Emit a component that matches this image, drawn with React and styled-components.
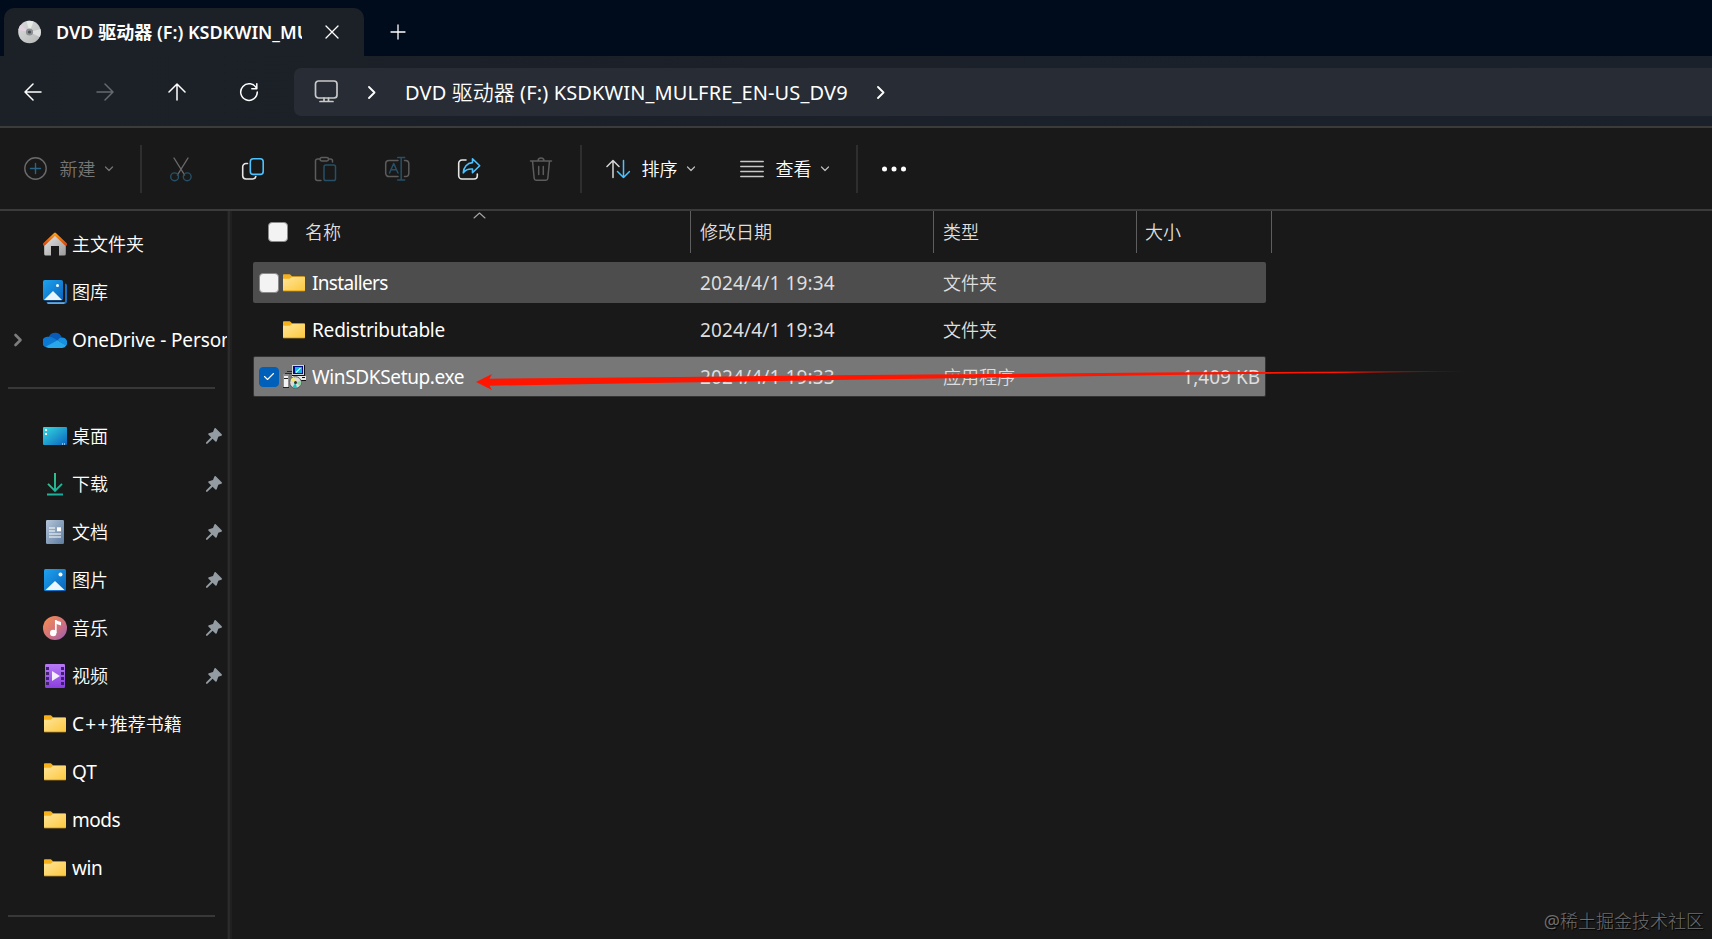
// App.jsx
import React from 'react';
import styled, { createGlobalStyle, css } from 'styled-components';

const GlobalStyle = createGlobalStyle`
  * {
    box-sizing: border-box;
  }

  body {
    margin: 0;
    background: #191919;
    color: #fff;
    font-family: 'Noto Sans', 'Noto Sans CJK SC', sans-serif;
    font-size: 18px;
    overflow: hidden;
  }

  svg {
    display: block;
    flex: none;
  }
`;

const Window = styled.div`
  position: relative;
  display: flex;
  flex-direction: column;
  width: 1712px;
  height: 939px;
  overflow: hidden;
  background: #191919;
`;

/* ---------- text ---------- */

const Label = styled.span`
  display: inline-block;
  font-family: 'Noto Sans CJK SC', sans-serif;
  font-size: ${(p) => p.$size || 18}px;
  font-weight: ${(p) => p.$weight || 350};
  line-height: 28px;
  margin-top: ${(p) => (p.$raised ? -2 : 0)}px;
  white-space: pre;
  color: ${(p) => p.$color || '#fff'};
`;

const Latin = styled.span`
  font-family: 'Noto Sans', sans-serif;
  font-size: ${(p) => p.$size || 19}px;
  font-weight: ${(p) => p.$weight || 400};
  letter-spacing: ${(p) => p.$spacing || 0}px;
`;

// latin letters are set a bit larger than the chinese ones
const Text = ({ children, size, latin, weight, latinWeight, spacing, color, raised }) => (
  <Label $size={size} $weight={weight} $color={color} $raised={raised}>
    {children.split(/([\u4e00-\u9fff]+)/).map((part, i) =>
      i % 2 ? (
        part
      ) : part ? (
        <Latin key={i} $size={latin} $weight={latinWeight} $spacing={spacing}>
          {part}
        </Latin>
      ) : null
    )}
  </Label>
);

/* ---------- title bar ---------- */

const TitleBar = styled.div`
  display: flex;
  height: 56px;
  padding: 8px 0 0 4px;
  background: #000b1b;
`;

const Tab = styled.div`
  display: flex;
  align-items: center;
  width: 360px;
  height: 48px;
  padding-left: 13px;
  border-radius: 10px 10px 0 0;
  background: #1c2027;
`;

const TabTitle = styled.div`
  width: 246px;
  margin: 0 23px 0 15px;
  overflow: hidden;
  height: 30px;
`;

const NewTab = styled.div`
  padding: 16px 0 0 26px;
`;

/* ---------- navigation ---------- */

const NavBar = styled.div`
  display: flex;
  align-items: center;
  height: 70px;
  padding-top: 2px;
  background: linear-gradient(90deg, #1c2027, #1a212b);
`;

const NavButtons = styled.div`
  display: grid;
  grid-template-columns: repeat(4, 72px);
  width: 288px;
  margin: -1px 9px 0 -3px;
  justify-items: center;
  align-items: center;
`;

const AddressBar = styled.div`
  display: flex;
  align-items: center;
  flex: 1;
  height: 48px;
  padding-left: 20px;
  border-radius: 7px 0 0 7px;
  background: #272c35;
`;

const Crumb = styled.div`
  width: 442px;
  margin: 0 30px 0 29px;
`;

const CrumbArrow = styled.div`
  margin-left: ${(p) => p.$left || 0}px;
`;

/* ---------- toolbar ---------- */

const Toolbar = styled.div`
  display: flex;
  align-items: center;
  height: 85px;
  border-top: 2px solid #3b3b3b;
  border-bottom: 2px solid #3b3b3b;
  background: #191919;
`;

const ToolButton = styled.div`
  display: flex;
  align-items: center;
  justify-content: center;
  width: 72px;
  height: 48px;
`;

const MenuButton = styled.div`
  display: flex;
  align-items: center;
  width: ${(p) => p.$width}px;
  padding-left: ${(p) => p.$left}px;
  gap: ${(p) => p.$gap || 12}px;

  > svg:last-child {
    margin-left: -3px;
  }
`;

const Divider = styled.div`
  width: 2px;
  height: 48px;
  background: #2e2e2e;
  margin-left: ${(p) => p.$left || 0}px;
  margin-right: ${(p) => p.$right || 0}px;
`;

/* ---------- body ---------- */

const Body = styled.div`
  display: flex;
  flex: 1;
`;

const Sidebar = styled.div`
  width: 227px;
  padding-top: 9px;
  overflow: hidden;
`;

const Splitter = styled.div`
  width: 5px;
  border-left: 1px solid #202020;
  border-right: 2px solid #202020;
  background: #2b2b2b;
`;

const SideItem = styled.div`
  display: grid;
  grid-template-columns: 28px 24px 1fr 21px;
  column-gap: 5px;
  align-items: center;
  height: 48px;
  padding-left: 10px;
  white-space: nowrap;
`;

const SideName = styled.div`
  height: 28px;
  margin-top: -2px;
  min-width: 0;
  ${(p) =>
    p.$wide &&
    css`
      grid-column: 3 / 5;
      overflow: hidden;
    `}
`;

const SideRule = styled.div`
  height: 2px;
  margin: ${(p) => p.$top}px 12px ${(p) => p.$bottom}px 8px;
  background: #383838;
`;

const Content = styled.div`
  flex: 1;
  padding-left: 21px;
`;

const Header = styled.div`
  display: grid;
  grid-template-columns: 438px 243px 203px 135px;
  height: 42px;
  margin-bottom: 9px;
`;

const HeaderCell = styled.div`
  position: relative;
  display: flex;
  align-items: center;
  padding-left: ${(p) => p.$left || 9}px;
  gap: 17px;
  border-right: 1px solid #5e5e5e;
`;

const SortMark = styled.div`
  position: absolute;
  top: 1px;
  left: 220px;
`;

const Row = styled.div`
  display: grid;
  grid-template-columns: 437px 243px 203px 130px;
  align-items: center;
  width: 1013px;
  height: 41px;
  margin-bottom: 6px;
  border-radius: 2px;
  background: ${(p) => (p.$hover ? '#4d4d4d' : 'transparent')};
  ${(p) =>
    p.$selected &&
    css`
      background: #777;
      border: 1px solid #333;
    `}
`;

const Cell = styled.div`
  display: flex;
  align-items: center;
  padding-left: ${(p) => p.$left ?? 10}px;
  margin-left: ${(p) => (p.$selected ? -1 : 0)}px;
  justify-content: ${(p) => (p.$end ? 'flex-end' : 'flex-start')};
  padding-right: ${(p) => (p.$end ? 7 : 0)}px;
`;

const CheckBox = styled.div`
  display: grid;
  place-items: center;
  flex: none;
  width: 20px;
  height: 20px;
  border-radius: 4px;
  border: 1px solid ${(p) => (p.$checked ? '#005fb8' : '#8a8a8a')};
  background: ${(p) => (p.$checked ? '#005fb8' : '#f3f3f3')};
  visibility: ${(p) => (p.$hidden ? 'hidden' : 'visible')};
`;

const FileIcon = styled.div`
  width: 24px;
  margin: 0 5px 0 4px;
`;

const Arrow = styled.svg`
  position: absolute;
  left: 476px;
  top: 366px;
`;

const Watermark = styled.div`
  position: absolute;
  right: 8px;
  bottom: 4px;
  text-shadow: 1px 1px 1px #000;
`;

/* ---------- icons ---------- */

const Stroke = ({ w, h, d, color = '#fff', width = 1.5, children }) => (
  <svg
    width={w}
    height={h}
    viewBox={`0 0 ${w} ${h}`}
    fill="none"
    stroke={color}
    strokeWidth={width}
    strokeLinecap="round"
    strokeLinejoin="round"
  >
    {d && <path d={d} />}
    {children}
  </svg>
);

const ChevronDown = ({ color }) => <Stroke w={10} h={6} d="M1.5 1L5 4.5 8.500 1" color={color} width={1.2} />;
const ChevronRight = () => <Stroke w={8} h={13} d="M1 1l5.5 5.5L1 12" width={1.8} />;

const DiscIcon = () => (
  <svg width="24" height="24" viewBox="0 0 24 24">
    <defs>
      <linearGradient id="disc" x1="0" y1="0" x2="1" y2="1">
        <stop offset="0" stopColor="#d9dcda" />
        <stop offset=".5" stopColor="#c9cbcb" />
        <stop offset="1" stopColor="#b4b6b6" />
      </linearGradient>
    </defs>
    <circle cx="12.5" cy="12" r="11.3" fill="url(#disc)" />
    <path d="M12.5 12l-3-11a11.3 11.3 0 0 1 7 .6z" fill="#e6ebe8" />
    <path d="M12.5 12l10.9-3a11.3 11.3 0 0 1-.6 8z" fill="#dde0df" />
    <path d="M12.5 12L1.3 10a11.3 11.3 0 0 1 2-5z" fill="#e3d3e2" />
    <circle cx="12.5" cy="12" r="3.6" fill="#8d9193" />
    <circle cx="12.5" cy="12" r="1.6" fill="#4c5053" />
  </svg>
);

const MonitorIcon = () => (
  <Stroke w={24} h={24} color="#c9c9c9" width={1.7}>
    <rect x="1.5" y="1" width="21.5" height="17" rx="3" />
    <path d="M10 18v3M14.5 18v3M6 21.5h13" />
  </Stroke>
);

const CutIcon = () => (
  <Stroke w={24} h={26} color="#6a6a6a" width={1.4}>
    <path d="M5 2l10.6 17M19 2L8.4 19" />
    <circle cx="5.6" cy="20.8" r="3.9" stroke="#265067" />
    <circle cx="18.2" cy="20.8" r="3.9" stroke="#265067" />
  </Stroke>
);

const CopyIcon = () => (
  <Stroke w={24} h={24} color="#e6e6e6" width={1.6}>
    <path d="M6.5 6.5H5a3.3 3.3 0 0 0-3.3 3.3v9A3.3 3.3 0 0 0 5 22h6.5a3.3 3.3 0 0 0 3.3-2.5" />
    <rect x="9.3" y="1.8" width="12.9" height="15.6" rx="3" stroke="#4cc2ff" />
  </Stroke>
);

const PasteIcon = () => (
  <Stroke w={24} h={26} color="#5c5c5c" width={1.5}>
    <path d="M7 3H4.5A2 2 0 0 0 2.5 5v17.5a2 2 0 0 0 2 2H8M16 3h1.5a2 2 0 0 1 2 2v1" />
    <rect x="7" y="1.5" width="8.5" height="3.5" rx="1.7" />
    <rect x="11" y="9" width="11.5" height="15.5" rx="1.8" stroke="#265067" />
  </Stroke>
);

const RenameIcon = () => (
  <Stroke w={26} h={26} color="#5c5c5c" width={1.5}>
    <path d="M14 4.5H5a3.3 3.3 0 0 0-3.3 3.3v9.5A3.3 3.3 0 0 0 5 20.6h9M20.5 4.5h1a3.3 3.3 0 0 1 3.3 3.3v9.5a3.3 3.3 0 0 1-3.3 3.3h-1" />
    <path d="M5.5 17L9.7 7.5 14 17M7 13.7h5.4M17.2 1.5V24M13.7 1.5h7M13.7 24h7" stroke="#265067" />
  </Stroke>
);

const ShareIcon = () => (
  <Stroke w={24} h={24} color="#e6e6e6" width={1.6}>
    <path d="M9 3H5a3.3 3.3 0 0 0-3.3 3.3v12.4A3.3 3.3 0 0 0 5 22h12a3.3 3.3 0 0 0 3.3-3.3V17" />
    <path d="M15.5 1.7l7.2 7-7.2 7v-3.6c-4-.3-7 .8-9.2 3.7.3-5.6 3.8-9.8 9.2-10.2z" stroke="#4cc2ff" />
  </Stroke>
);

const TrashIcon = () => (
  <Stroke w={24} h={26} color="#5c5c5c" width={1.5}>
    <path d="M1.5 5h21M9 5a3 3 0 0 1 6 0M3.5 5l1.7 17.5a2 2 0 0 0 2 1.8h9.6a2 2 0 0 0 2-1.8L20.5 5M9.7 10.5v8M14.3 10.5v8" />
  </Stroke>
);

const SortIcon = () => (
  <Stroke w={24} h={20} color="#d6d6d6" width={1.5}>
    <path d="M7 18.5V1.5M1 7.5l6-6 6 6" />
    <path d="M17.5 1.5v17M11.5 12.5l6 6 6-6" stroke="#4cc2ff" />
  </Stroke>
);

const ViewIcon = () => (
  <Stroke w={24} h={18} color="#c8c8c8" width={1.5} d="M.8 1.5h22.4M.8 6.5h22.4M.8 11.5h22.4M.8 16.5h22.4" />
);

const HomeIcon = () => (
  <svg width="24" height="24" viewBox="0 0 24 24">
    <defs>
      <linearGradient id="wall" x1="0" y1="0" x2="1" y2="1">
        <stop offset="0" stopColor="#e8e8e8" />
        <stop offset="1" stopColor="#9a9a9a" />
      </linearGradient>
      <linearGradient id="roof" x1="0" y1="0" x2="0" y2="1">
        <stop offset="0" stopColor="#ff9a1a" />
        <stop offset="1" stopColor="#d84a0c" />
      </linearGradient>
    </defs>
    <path d="M1.2 11L12 2.5 22.8 11v11a1.5 1.5 0 0 1-1.5 1.5H16V14H8v9.5H2.7A1.5 1.5 0 0 1 1.2 22z" fill="url(#wall)" />
    <path d="M1.2 12.2L12 2l10.8 10.2" fill="none" stroke="url(#roof)" strokeWidth="2.7" strokeLinecap="round" strokeLinejoin="round" />
  </svg>
);

const BlueGradient = ({ id }) => (
  <linearGradient id={id} x1="0" y1="0" x2="1" y2="1">
    <stop offset="0" stopColor="#1ea4ee" />
    <stop offset="1" stopColor="#0a62bd" />
  </linearGradient>
);

const GalleryIcon = () => (
  <svg width="24" height="24" viewBox="0 0 24 24">
    <defs>
      <BlueGradient id="gallery" />
    </defs>
    <path d="M22 3.5a2 2 0 0 1 2 1.5v16a3 3 0 0 1-3 3H5a2 2 0 0 1-1.5-1.8H21a1 1 0 0 0 1-1z" fill="#1b6fc0" />
    <path d="M4 22.2h18L21 24H5z" fill="#66a9dd" />
    <rect width="20" height="20.5" rx="1.8" fill="url(#gallery)" />
    <path d="M1 20l9-9 9 9z" fill="#eaf4fc" />
    <circle cx="14.5" cy="5.5" r="1.5" fill="#fff" />
  </svg>
);

const CloudIcon = () => (
  <svg width="24" height="16" viewBox="0 0 24 16">
    <path d="M5.8 5A7 7 0 0 1 18.8 5.5L13 10z" fill="#0a5bb5" />
    <path d="M5.8 4.8c2.2-.2 4 .7 9 3.6L3.2 15.2A5.3 5.3 0 0 1 5.8 4.8z" fill="#0b78d4" />
    <path d="M14.6 8.3c1.8-2.5 3.4-3 4.6-2.8A5 5 0 0 1 23 13.8z" fill="#1690e0" />
    <path d="M2.5 14.8L14.6 8.3l8.6 5.2A4.7 4.7 0 0 1 19.3 16H5.5a5 5 0 0 1-3-1.2z" fill="#28a8ea" />
  </svg>
);

const DesktopIcon = () => (
  <svg width="24" height="18" viewBox="0 0 24 18">
    <defs>
      <linearGradient id="desk" x1="0" y1="0" x2="1" y2="1">
        <stop offset="0" stopColor="#35dbe0" />
        <stop offset="1" stopColor="#0a63bf" />
      </linearGradient>
    </defs>
    <rect width="24" height="18" rx="1" fill="url(#desk)" />
    <path d="M2 2h2v2H2zM2 6h2v2H2zM19 16.5h1v1h-1zM21 16.5h1v1h-1z" fill="#fff" />
  </svg>
);

const DownloadIcon = () => (
  <svg width="24" height="24" viewBox="0 0 24 24" fill="none" stroke="url(#down)" strokeWidth="1.9">
    <defs>
      <linearGradient id="down" gradientUnits="userSpaceOnUse" x1="4" y1="0" x2="20" y2="24">
        <stop offset="0" stopColor="#35d18c" />
        <stop offset="1" stopColor="#17a8a0" />
      </linearGradient>
    </defs>
    <path d="M12 1v17.5M5 11.8l7 7 7-7M4 22.5h16" />
  </svg>
);

const DocIcon = () => (
  <svg width="18" height="24" viewBox="0 0 18 24">
    <defs>
      <linearGradient id="doc" x1="0" y1="0" x2="1" y2="1">
        <stop offset="0" stopColor="#b4c5d8" />
        <stop offset="1" stopColor="#5d7c9f" />
      </linearGradient>
    </defs>
    <rect width="18" height="24" rx="1.2" fill="url(#doc)" />
    <path d="M3 8h6M3 11h6M3 14h12M3 17h12" stroke="#fff" strokeWidth="1.2" />
    <rect x="11" y="7.3" width="4" height="4" fill="#fff" />
  </svg>
);

const PictureIcon = () => (
  <svg width="22" height="22" viewBox="0 0 22 22">
    <defs>
      <BlueGradient id="picture" />
    </defs>
    <rect width="22" height="22" rx="1.5" fill="url(#picture)" />
    <path d="M1.5 21L11 12l9.5 9z" fill="#eef6fd" />
    <circle cx="16.5" cy="5.5" r="2" fill="#fff" />
  </svg>
);

const MusicIcon = () => (
  <svg width="24" height="24" viewBox="0 0 24 24">
    <defs>
      <linearGradient id="music" x1="0" y1="0" x2="1" y2="1">
        <stop offset="0" stopColor="#f4904e" />
        <stop offset=".55" stopColor="#d4717c" />
        <stop offset="1" stopColor="#9260b8" />
      </linearGradient>
    </defs>
    <circle cx="12" cy="12" r="12" fill="url(#music)" />
    <path d="M12 4l6 2v3.5L13.5 8" fill="#fff" />
    <path d="M12.8 4v13" stroke="#fff" strokeWidth="1.7" />
    <circle cx="10.2" cy="17" r="3.2" fill="#fff" />
  </svg>
);

const VideoIcon = () => (
  <svg width="20" height="24" viewBox="0 0 20 24">
    <defs>
      <linearGradient id="video" x1="0" y1="0" x2="0" y2="1">
        <stop offset="0" stopColor="#b77af5" />
        <stop offset="1" stopColor="#8a3fe0" />
      </linearGradient>
    </defs>
    <rect width="20" height="24" rx="1.2" fill="url(#video)" />
    <path d="M1 3h3v3H1zM1 8h3v3H1zM1 13h3v3H1zM1 18h3v3H1zM16 3h3v3h-3zM16 8h3v3h-3zM16 13h3v3h-3zM16 18h3v3h-3z" fill="#40206e" />
    <path d="M7 7l8 5-8 5z" fill="#f3eefb" />
  </svg>
);

const FolderIcon = () => (
  <svg width="22" height="18" viewBox="0 0 22 18">
    <defs>
      <linearGradient id="folder" x1="0" y1="0" x2="1" y2="1">
        <stop offset="0" stopColor="#ffe599" />
        <stop offset="1" stopColor="#fcc73c" />
      </linearGradient>
    </defs>
    <path d="M0 1.2C0 .5.5.3 1 .3h5.5c.5 0 .9.2 1.2.6L9 2.2h12c.6 0 1 .3 1 .9V7H0z" fill="#f6b01c" />
    <path d="M0 4.8h6.5L9 3h12.3a.7.7 0 0 1 .7.7v12.6a.8.8 0 0 1-.8.8H.8a.8.8 0 0 1-.8-.8z" fill="url(#folder)" />
    <path d="M.3 16.8h21.4" stroke="#e8a820" strokeWidth="1" />
  </svg>
);

const InstallerIcon = () => (
  <svg width="24" height="24" viewBox="0 0 24 24" shapeRendering="crispEdges">
    <path d="M4 6h5v1H4zM2 8h7v1H2z" fill="#2a2a2a" />
    <path d="M0 9h6v14H0z" fill="#8e8e8e" />
    <path d="M1 11h4v11H1z" fill="#f2f2f2" />
    <path d="M1 13h4v1H1zM0 22h6v1H0z" fill="#222" />
    <path d="M9 0h13v11H9z" fill="#d4d4d4" />
    <path d="M21 0h1v12h-1zM9 10h13v1H9z" fill="#111" />
    <path d="M10 1h10v8H10z" fill="#000e84" />
    <path d="M12 2h7v6h-7z" fill="#12b5e8" />
    <path d="M12 7l4-4h2l-5 5z" fill="#9ff0fb" />
    <path d="M9 11h14v4H9z" fill="#e8e8e8" />
    <path d="M19 12h3v1h-3zM18 15h5v1h-5z" fill="#111" />
    <g shapeRendering="auto">
      <circle cx="12.5" cy="17.5" r="5.8" fill="#dcdcdc" stroke="#555" />
      <path d="M12.5 17.5l-5-2.8A6 6 0 0 1 11 12z" fill="#f3ea65" />
      <path d="M12.5 17.5L14 23a6 6 0 0 1-4.5-.7z" fill="#19c5bd" />
      <path d="M12.5 17.5l5.5-1.8a6 6 0 0 1-.8 5z" fill="#8fd9a4" />
      <circle cx="12.5" cy="17.5" r="1.5" fill="#333" />
    </g>
  </svg>
);

const PinIcon = () => (
  <svg width="16" height="16" viewBox="0 0 16 16" fill="#939ca3">
    <path d="M9.7.3l6 6c.4.5.2 1.2-.4 1.4l-3 1.1-1.5 4.3c-.2.7-.9.9-1.4.4l-2.800-2.800L1.300 15.800H0v-1.200l5.100-5.300-2.600-2.600c-.5-.5-.3-1.200.4-1.400L7 3.900 8.300.7C8.500.1 9.200-.1 9.700.3z" />
  </svg>
);

/* ---------- data ---------- */

const topItems = [
  { name: '主文件夹', icon: HomeIcon },
  { name: '图库', icon: GalleryIcon },
  { name: 'OneDrive - Personal', icon: CloudIcon, expand: true, wide: true, spacing: -0.12 },
];

const pinnedItems = [
  { name: '桌面', icon: DesktopIcon, pin: true },
  { name: '下载', icon: DownloadIcon, pin: true },
  { name: '文档', icon: DocIcon, pin: true },
  { name: '图片', icon: PictureIcon, pin: true },
  { name: '音乐', icon: MusicIcon, pin: true },
  { name: '视频', icon: VideoIcon, pin: true },
  { name: 'C++推荐书籍', icon: FolderIcon, wide: true, spacing: 1.3 },
  { name: 'QT', icon: FolderIcon },
  { name: 'mods', icon: FolderIcon, spacing: -0.5 },
  { name: 'win', icon: FolderIcon, spacing: -0.4 },
];

const files = [
  { name: 'Installers', date: '2024/4/1 19:34', type: '文件夹', size: '', icon: FolderIcon, hover: true, spacing: -0.66 },
  { name: 'Redistributable', date: '2024/4/1 19:34', type: '文件夹', size: '', icon: FolderIcon, spacing: -0.2 },
  {
    name: 'WinSDKSetup.exe',
    date: '2024/4/1 19:33',
    type: '应用程序',
    size: '1,409 KB',
    icon: InstallerIcon,
    selected: true,
    spacing: -0.36,
  },
];

const IconSlot = styled.div`
  display: flex;
  justify-content: center;
`;

const Expander = styled.div`
  padding-left: 1px;
`;

const SideEntry = ({ name, icon: Icon, pin, expand, wide, spacing }) => (
  <SideItem>
    <Expander>{expand && <Stroke w={14} h={14} d="M4.5 2l5 5-5 5" color="#7d7d7d" width={2.6} />}</Expander>
    <IconSlot>
      <Icon />
    </IconSlot>
    <SideName $wide={wide}>
      <Text spacing={spacing}>{name}</Text>
    </SideName>
    {pin && <PinIcon />}
  </SideItem>
);

const FileRow = ({ file }) => {
  const Icon = file.icon;
  return (
    <Row $hover={file.hover} $selected={file.selected}>
      <Cell $left={6} $selected={file.selected}>
        <CheckBox $checked={file.selected} $hidden={!file.hover && !file.selected}>
          {file.selected && <Stroke w={12} h={9} d="M1.5 4.5l3 3 6-6" width={1.1} />}
        </CheckBox>
        <FileIcon>
          <Icon />
        </FileIcon>
        <Text spacing={file.spacing}>{file.name}</Text>
      </Cell>
      <Cell $selected={file.selected}>
        <Text color="#dedede" spacing={0.14}>
          {file.date}
        </Text>
      </Cell>
      <Cell $selected={file.selected}>
        <Text color="#dedede" raised>
          {file.type}
        </Text>
      </Cell>
      <Cell $end>
        <Text color="#dedede">{file.size}</Text>
      </Cell>
    </Row>
  );
};

const App = () => {
  return (
    <Window>
      <GlobalStyle />
      <TitleBar>
        <Tab>
          <DiscIcon />
          <TabTitle>
            <Text weight={700} latin={18} latinWeight={600}>
              DVD 驱动器 (F:) KSDKWIN_MULFRE
            </Text>
          </TabTitle>
          <Stroke w={14} h={14} d="M1 1l12 12M13 1L1 13" width={1.3} />
        </Tab>
        <NewTab>
          <Stroke w={16} h={16} d="M8 1v14M1 8h14" width={1.3} />
        </NewTab>
      </TitleBar>

      <NavBar>
        <NavButtons>
          <Stroke w={18} h={18} d="M17 9H1M9 1L1 9l8 8" />
          <Stroke w={18} h={18} d="M1 9h16M9 1l8 8-8 8" color="#666a70" />
          <Stroke w={18} h={18} d="M9 17V1M1 9l8-8 8 8" />
          <Stroke w={20} h={20} d="M17.5 6.5A8.3 8.3 0 1 0 18.3 10M17.8 1.8v5h-5" />
        </NavButtons>
        <AddressBar>
          <MonitorIcon />
          <CrumbArrow $left={30}>
            <ChevronRight />
          </CrumbArrow>
          <Crumb>
            <Text size={21} latin={20} spacing={0.13}>
              DVD 驱动器 (F:) KSDKWIN_MULFRE_EN-US_DV9
            </Text>
          </Crumb>
          <CrumbArrow>
            <ChevronRight />
          </CrumbArrow>
        </AddressBar>
      </NavBar>

      <Toolbar>
        <MenuButton $width={140} $left={24} $gap={11.5}>
          <Stroke w={24} h={24} color="#6a6a6a" width={1.4}>
            <circle cx="11.5" cy="11.5" r="10.7" />
            <path d="M11.5 6.5v10M6.5 11.5h10" stroke="#2b6583" />
          </Stroke>
          <Text color="#757575" raised>
            新建
          </Text>
          <ChevronDown color="#757575" />
        </MenuButton>
        <Divider $right={3} />
        <ToolButton>
          <CutIcon />
        </ToolButton>
        <ToolButton>
          <CopyIcon />
        </ToolButton>
        <ToolButton>
          <PasteIcon />
        </ToolButton>
        <ToolButton>
          <RenameIcon />
        </ToolButton>
        <ToolButton>
          <ShareIcon />
        </ToolButton>
        <ToolButton>
          <TrashIcon />
        </ToolButton>
        <Divider $left={3} />
        <MenuButton $width={131} $left={24} $gap={11.5}>
          <SortIcon />
          <Text raised>排序</Text>
          <ChevronDown color="#bdbdbd" />
        </MenuButton>
        <MenuButton $width={143} $left={27} $gap={11.5}>
          <ViewIcon />
          <Text raised>查看</Text>
          <ChevronDown color="#bdbdbd" />
        </MenuButton>
        <Divider $right={23} />
        <svg width="26" height="6" viewBox="0 0 26 6" fill="#fff">
          <circle cx="3.5" cy="3" r="2.5" />
          <circle cx="13" cy="3" r="2.5" />
          <circle cx="22.5" cy="3" r="2.5" />
        </svg>
      </Toolbar>

      <Body>
        <Sidebar>
          {topItems.map((item) => (
            <SideEntry key={item.name} {...item} />
          ))}
          <SideRule $top={23} $bottom={23} />
          {pinnedItems.map((item) => (
            <SideEntry key={item.name} {...item} />
          ))}
          <SideRule $top={23} $bottom={0} />
        </Sidebar>
        <Splitter />
        <Content>
          <Header>
            <HeaderCell $left={15}>
              <CheckBox />
              <Text color="#dedede" raised>
                名称
              </Text>
              <SortMark>
                <Stroke w={13} h={7} d="M1 6l5.5-5L12 6" color="#a5a5a5" width={1.1} />
              </SortMark>
            </HeaderCell>
            <HeaderCell>
              <Text color="#dedede" raised>
                修改日期
              </Text>
            </HeaderCell>
            <HeaderCell>
              <Text color="#dedede" raised>
                类型
              </Text>
            </HeaderCell>
            <HeaderCell $left={8}>
              <Text color="#dedede" raised>
                大小
              </Text>
            </HeaderCell>
          </Header>
          {files.map((file) => (
            <FileRow key={file.name} file={file} />
          ))}
        </Content>
      </Body>

      <Arrow width="992" height="32" viewBox="0 0 992 32">
        <defs>
          <linearGradient id="tail" x1="0" y1="0" x2="1" y2="0">
            <stop offset="0" stopColor="#ff1500" />
            <stop offset=".88" stopColor="#ff1500" />
            <stop offset="1" stopColor="#ff1500" stopOpacity="0" />
          </linearGradient>
        </defs>
        <path d="M0 16L16 8l-2.5 4.7L204 11l155-1.7L539 7.7 710 6.3 990 4.900v.7L710 8.700 539 11.300 359 14 204 16.500 13.500 19.700 16 24z" fill="url(#tail)" />
      </Arrow>
      <Watermark>
        <Text color="#6e6e6e" latin={18} weight={300}>
          @稀土掘金技术社区
        </Text>
      </Watermark>
    </Window>
  );
};

export default App;
